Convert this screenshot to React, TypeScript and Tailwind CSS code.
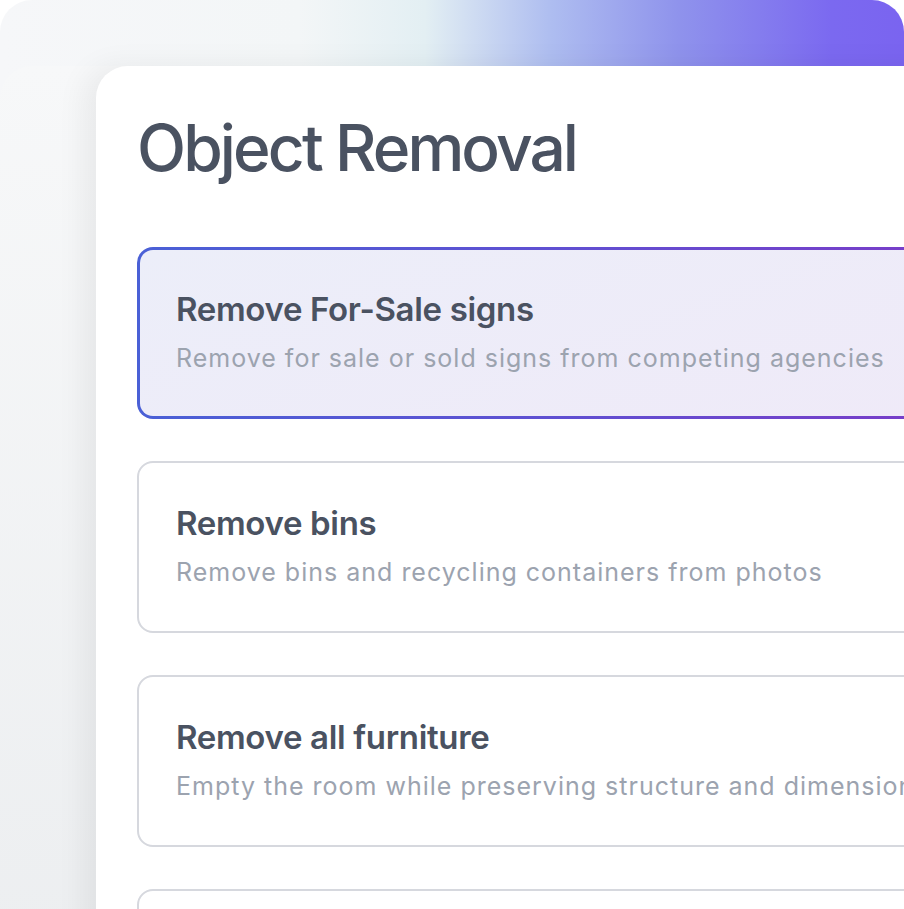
const options = [
  {
    title: "Remove For-Sale signs",
    desc: "Remove for sale or sold signs from competing agencies",
    active: true,
  },
  {
    title: "Remove bins",
    desc: "Remove bins and recycling containers from photos",
  },
  {
    title: "Remove all furniture",
    desc: "Empty the room while preserving structure and dimensions",
  },
];

const CardText = ({ title, desc }: { title: string; desc: string }) => (
  <>
    <h3 className="text-[33px] leading-10 font-semibold text-[#4a5261] tracking-[-0.01em]">{title}</h3>
    <p className="mt-[13px] text-[25px] leading-8 text-[#9ca3af] tracking-[0.04em] whitespace-nowrap">{desc}</p>
  </>
);

const OptionCard = ({ title, desc, active }: { title: string; desc: string; active?: boolean }) => {
  if (active) {
    return (
      <div className="rounded-[16px] p-[3px] bg-[linear-gradient(90deg,#4a60d6,#5f50d2_50%,#7a3cc8)]">
        <div className="rounded-[13px] bg-[linear-gradient(160deg,#eceef9,#efeaf8)] pl-[36px] pt-[39px] pb-[42px]">
          <CardText title={title} desc={desc} />
        </div>
      </div>
    );
  }
  return (
    <div className="rounded-[16px] border-2 border-[#d6d8de] bg-white pl-[37px] pt-[40px] pb-[43px]">
      <CardText title={title} desc={desc} />
    </div>
  );
};

export default function App() {
  return (
    <div className="w-[904px] h-[909px] overflow-hidden bg-white font-['Inter',sans-serif]">
      <div className="h-[907px] rounded-[32px] pl-[96px] pt-[66px] bg-[linear-gradient(90deg,#f6f7f9_0%,#f3f6f7_33%,#e3eff3_47%,#aebdf0_61%,#8f93ec_75%,#7b69f0_92%,#7a64f0_100%)]">
        <div className="h-[907px] bg-[linear-gradient(180deg,#f7f8f9,#eceef0)] rounded-tl-[32px] -ml-[96px] pl-[96px]">
          <div className="w-[860px] h-[900px] bg-white rounded-tl-[32px] shadow-[-12px_0_30px_rgba(0,0,0,0.06)] pl-[41px] pt-[42px]">
            <h1 className="text-[64px] leading-[80px] font-medium tracking-[-0.045em] text-[#4a5261]">
              Object Removal
            </h1>
            <div className="mt-[59px] flex flex-col gap-[42px] w-[820px]">
              {options.map((o) => (
                <OptionCard key={o.title} {...o} />
              ))}
              <div className="h-[172px] rounded-[16px] border-2 border-[#d6d8de] bg-white" />
            </div>
          </div>
        </div>
      </div>
    </div>
  );
}
